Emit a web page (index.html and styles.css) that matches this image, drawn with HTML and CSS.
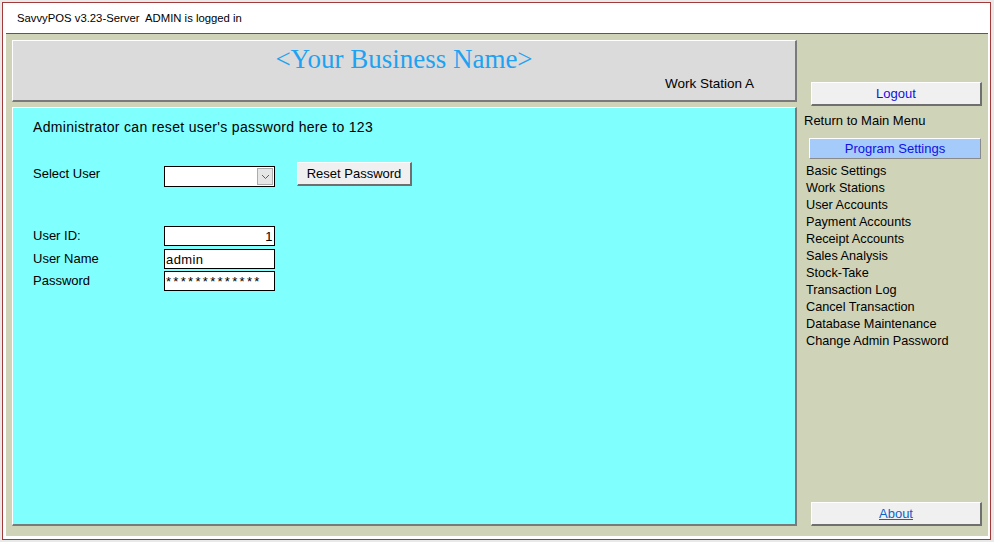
FILE: index.html
```html
<!DOCTYPE html>
<html lang="en">
<head>
    <meta charset="UTF-8">
    <meta name="viewport" content="width=device-width, initial-scale=1.0">
    <title>SavvyPOS</title>

    <link rel="stylesheet" href="styles.css">
</head>
<body>

    <div class="window">

        <div class="titlebar">SavvyPOS v3.23-Server&nbsp; ADMIN is logged in</div>

        <div class="client">

            <div class="main">

                <div class="header">
                    <div class="business">&lt;Your Business Name&gt;</div>
                    <div class="station">Work Station A</div>
                </div>

                <div class="panel">
                    <p class="intro">Administrator can reset user's password here to 123</p>

                    <div class="selectRow">
                        <span class="label">Select User</span>
                        <div class="combo">
                            <span class="comboArrow">
                                <svg width="9" height="6" viewBox="0 0 9 6"><path d="M1 1 L4.5 4.5 L8 1" fill="none" stroke="#606060" stroke-width="1"/></svg>
                            </span>
                        </div>
                        <button class="btn btn-reset">Reset Password</button>
                    </div>

                    <div class="fields">
                        <div class="field">
                            <span class="label">User ID:</span>
                            <input class="box box-num" type="text" value="1" readonly>
                        </div>
                        <div class="field">
                            <span class="label">User Name</span>
                            <input class="box" type="text" value="admin" readonly>
                        </div>
                        <div class="field">
                            <span class="label">Password</span>
                            <input class="box box-pass" type="text" value="*************" readonly>
                        </div>
                    </div>
                </div>

            </div>

            <div class="side">
                <button class="btn btn-side btn-logout">Logout</button>
                <div class="backLink">Return to Main Menu</div>
                <button class="btn btn-settings">Program Settings</button>

                <ul class="menu">
                    <li>Basic Settings</li>
                    <li>Work Stations</li>
                    <li>User Accounts</li>
                    <li>Payment Accounts</li>
                    <li>Receipt Accounts</li>
                    <li>Sales Analysis</li>
                    <li>Stock-Take</li>
                    <li>Transaction Log</li>
                    <li>Cancel Transaction</li>
                    <li>Database Maintenance</li>
                    <li>Change Admin Password</li>
                </ul>

                <button class="btn btn-side btn-about"><a href="#">About</a></button>
            </div>

        </div>

    </div>

</body>
</html>
```

FILE: styles.css
```css
*{
    margin: 0;
    padding: 0;
    box-sizing: border-box;
}

body{
    background: #e9e9e9;
    font-family: "Liberation Sans", Arial, sans-serif;
    color: #000;
}

.window{
    margin: 2px 0 0 2px;
    width: 989px;
    height: 538px;
    border: 1px solid #a23a3a;
    background: #fff;
    padding: 0 2px 3px 3px;
    display: flex;
    flex-direction: column;
}

.titlebar{
    height: 30px;
    line-height: 30px;
    padding-left: 11px;
    font-size: 11.3px;
}

.client{
    flex: 1;
    border-top: 1px solid #a23a3a;
    background: #cfd4b9;
    display: flex;
    padding: 6px 0 10px 6px;
}

/* left side */

.main{
    width: 785px;
    display: flex;
    flex-direction: column;
}

.header{
    height: 62px;
    background: #dbdbdb;
    border-top: 1px solid #fff;
    border-left: 1px solid #fff;
    border-right: 2px solid #7a7a7a;
    border-bottom: 2px solid #7a7a7a;
}

.business{
    font-family: "Liberation Serif", "Times New Roman", serif;
    font-size: 27px;
    color: #1ea2f2;
    text-align: center;
    line-height: 30px;
    margin-top: 3px;
}

.station{
    text-align: right;
    font-size: 13.5px;
    padding-right: 41px;
    margin-top: 2px;
}

.panel{
    flex: 1;
    margin-top: 5px;
    background: #80ffff;
    border-top: 1px solid #fff;
    border-left: 1px solid #fff;
    border-right: 2px solid #7a7a7a;
    border-bottom: 2px solid #7a7a7a;
    padding: 11px 0 0 20px;
}

.intro{
    font-size: 14px;
    line-height: 16px;
    letter-spacing: 0.33px;
}

.label{
    display: inline-block;
    width: 131px;
    font-size: 13px;
}

.selectRow{
    display: flex;
    align-items: flex-start;
    margin-top: 27px;
    height: 24px;
}

.selectRow .label{
    line-height: 24px;
}

.combo{
    width: 111px;
    height: 21px;
    margin-top: 4px;
    border: 1px solid #000;
    background: #fff;
    display: flex;
    justify-content: flex-end;
    align-items: center;
    padding-right: 1px;
}

.comboArrow{
    width: 16px;
    height: 17px;
    background: #e6e6e6;
    border: 1px solid #acacac;
    display: flex;
    align-items: center;
    justify-content: center;
}

.btn{
    font-family: "Liberation Sans", Arial, sans-serif;
    font-size: 13px;
    background: #f0f0f0;
    border-top: 1px solid #fff;
    border-left: 1px solid #fff;
    border-right: 2px solid #6f6f6f;
    border-bottom: 2px solid #6f6f6f;
    color: #000;
}

.btn-reset{
    width: 115px;
    height: 24px;
    margin-left: 22px;
}

.fields{
    margin-top: 40px;
}

.field{
    display: flex;
    align-items: center;
    height: 20px;
    margin-bottom: 3px;
}

.field:nth-child(2){
    margin-bottom: 2px;
}

.field .label{
    position: relative;
    top: -1px;
}

.box{
    width: 111px;
    height: 20px;
    border: 1px solid #000;
    background: #fff;
    font-family: "Liberation Sans", Arial, sans-serif;
    font-size: 13px;
    padding: 0 1px;
    outline: none;
    letter-spacing: 0.4px;
}

.box-num{
    text-align: right;
}

.box-pass{
    letter-spacing: 2.3px;
}

/* right side */

.side{
    flex: 1;
    display: flex;
    flex-direction: column;
    padding-left: 7px;
}

.btn-side{
    width: 171px;
    height: 24px;
    margin-left: 7px;
}

.btn-logout{
    margin-top: 42px;
    color: #1111e6;
}

.backLink{
    font-size: 13px;
    line-height: 16px;
    margin-top: 7px;
}

.btn-settings{
    width: 172px;
    height: 21px;
    margin-top: 9px;
    margin-left: 5px;
    background: #a4cbf9;
    color: #1111e6;
    border-right-width: 1px;
    border-bottom-width: 1px;
    border-right-color: #8a8a8a;
    border-bottom-color: #8a8a8a;
}

.menu{
    list-style: none;
    margin-top: 4px;
    padding-left: 2px;
}

.menu li{
    font-size: 12.7px;
    line-height: 17px;
}

.btn-about{
    margin-top: auto;
}

.btn-about a{
    color: #0d63c9;
}
```
